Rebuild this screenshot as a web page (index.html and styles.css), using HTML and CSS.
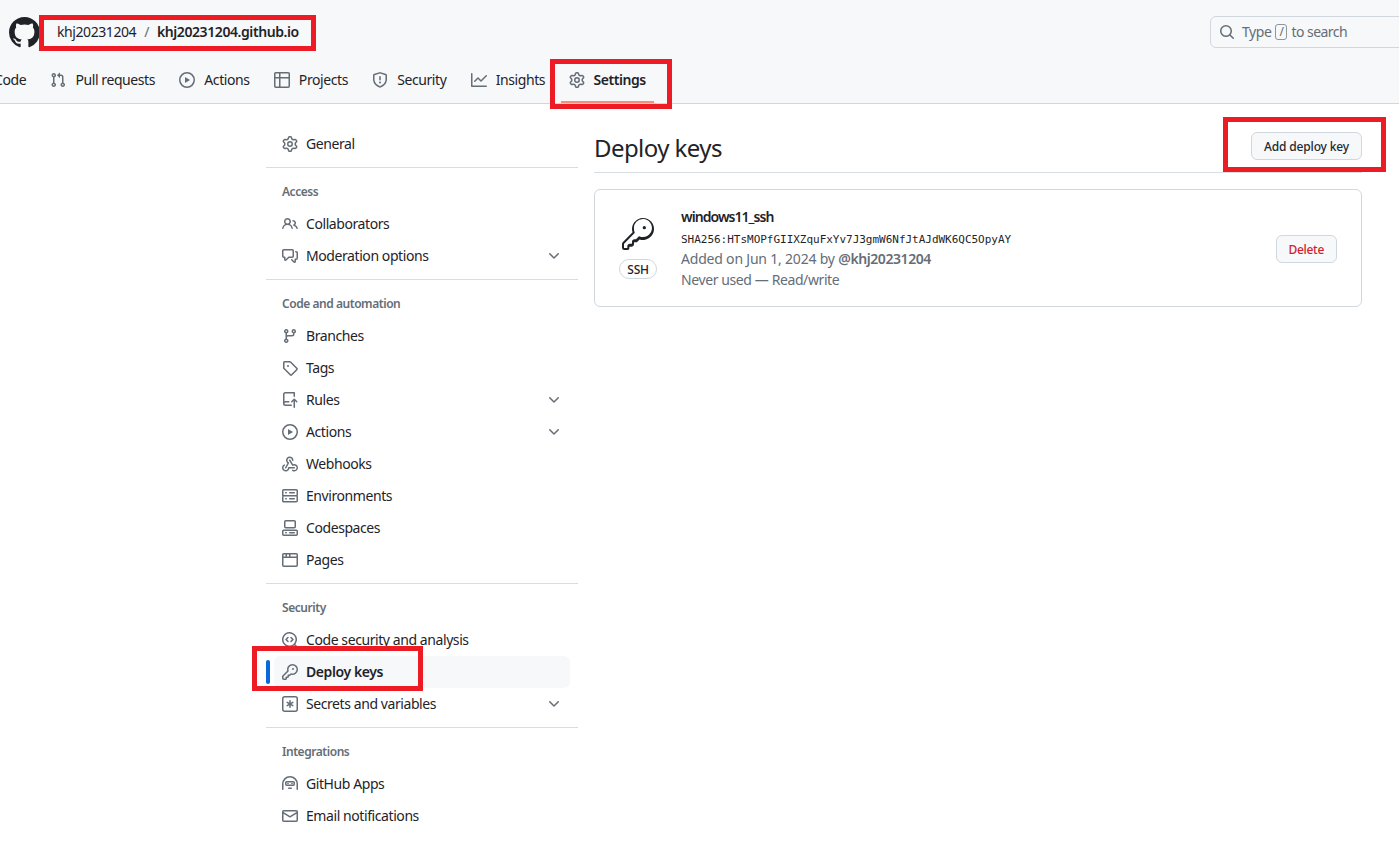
FILE: index.html
```html
<!DOCTYPE html>
<html lang="en">
<head>
    <meta charset="UTF-8">
    <meta name="viewport" content="width=device-width, initial-scale=1.0">
    <title>Deploy keys</title>
    <link rel="stylesheet" href="styles.css">
</head>
<body>
    <svg class="icon-defs" aria-hidden="true">
        <symbol id="i-github" viewBox="0 0 16 16"><path d="M8 0c4.42 0 8 3.58 8 8a8.013 8.013 0 0 1-5.45 7.59c-.4.08-.55-.17-.55-.38 0-.27.01-1.13.01-2.2 0-.75-.25-1.23-.54-1.48 1.78-.2 3.65-.88 3.65-3.95 0-.88-.31-1.59-.82-2.15.08-.2.36-1.02-.08-2.12 0 0-.67-.22-2.2.82-.64-.18-1.32-.27-2-.27-.68 0-1.36.09-2 .27-1.53-1.03-2.2-.82-2.2-.82-.44 1.1-.16 1.92-.08 2.12-.51.56-.82 1.28-.82 2.15 0 3.06 1.86 3.75 3.64 3.95-.23.2-.44.55-.51 1.07-.46.21-1.61.55-2.33-.66-.15-.24-.6-.83-1.23-.82-.67.01-.27.38.01.53.34.19.73.9.82 1.13.16.45.68 1.31 2.69.94 0 .67.01 1.3.01 1.49 0 .21-.15.45-.55.38A7.995 7.995 0 0 1 0 8c0-4.42 3.58-8 8-8Z"/></symbol>
        <symbol id="i-code" viewBox="0 0 16 16"><path d="m11.28 3.22 4.25 4.25a.75.75 0 0 1 0 1.06l-4.25 4.25a.749.749 0 0 1-1.275-.326.749.749 0 0 1 .215-.734L13.94 8l-3.72-3.72a.749.749 0 0 1 .326-1.275.749.749 0 0 1 .734.215Zm-6.56 0a.751.751 0 0 1 1.042.018.751.751 0 0 1 .018 1.042L2.06 8l3.72 3.72a.749.749 0 0 1-.326 1.275.749.749 0 0 1-.734-.215L.47 8.53a.75.75 0 0 1 0-1.06Z"/></symbol>
        <symbol id="i-pull" viewBox="0 0 16 16"><path d="M1.5 3.25a2.25 2.25 0 1 1 3 2.122v5.256a2.251 2.251 0 1 1-1.5 0V5.372A2.25 2.25 0 0 1 1.5 3.25Zm5.677-.177L9.573.677A.25.25 0 0 1 10 .854V2.5h1A2.5 2.5 0 0 1 13.5 5v5.628a2.251 2.251 0 1 1-1.5 0V5a1 1 0 0 0-1-1h-1v1.646a.25.25 0 0 1-.427.177L7.177 3.427a.25.25 0 0 1 0-.354ZM3.75 2.5a.75.75 0 1 0 0 1.5.75.75 0 0 0 0-1.5Zm0 9.5a.75.75 0 1 0 0 1.5.75.75 0 0 0 0-1.5Zm8.25.75a.75.75 0 1 0 1.5 0 .75.75 0 0 0-1.5 0Z"/></symbol>
        <symbol id="i-play" viewBox="0 0 16 16"><path d="M8 0a8 8 0 1 1 0 16A8 8 0 0 1 8 0ZM1.5 8a6.5 6.5 0 1 0 13 0 6.5 6.5 0 0 0-13 0Zm4.879-2.773 4.264 2.559a.25.25 0 0 1 0 .428l-4.264 2.559A.25.25 0 0 1 6 10.559V5.442a.25.25 0 0 1 .379-.215Z"/></symbol>
        <symbol id="i-table" viewBox="0 0 16 16"><path d="M0 1.75C0 .784.784 0 1.75 0h12.5C15.216 0 16 .784 16 1.75v12.5A1.75 1.75 0 0 1 14.25 16H1.75A1.75 1.75 0 0 1 0 14.25ZM6.5 6.5v8h7.75a.25.25 0 0 0 .25-.25V6.5Zm8-1.5V1.75a.25.25 0 0 0-.25-.25H6.5V5Zm-13 1.5v7.75c0 .138.112.25.25.25H5v-8ZM5 5V1.5H1.75a.25.25 0 0 0-.25.25V5Z"/></symbol>
        <symbol id="i-shield" viewBox="0 0 16 16"><path d="M7.467.133a1.748 1.748 0 0 1 1.066 0l5.25 1.68A1.75 1.75 0 0 1 15 3.48V7c0 1.566-.32 3.182-1.303 4.682-.983 1.498-2.585 2.813-5.032 3.855a1.697 1.697 0 0 1-1.33 0c-2.447-1.042-4.049-2.357-5.032-3.855C1.32 10.182 1 8.566 1 7V3.48a1.75 1.75 0 0 1 1.217-1.667Zm.61 1.429a.25.25 0 0 0-.153 0l-5.25 1.68a.25.25 0 0 0-.174.238V7c0 1.358.275 2.666 1.057 3.86.784 1.194 2.121 2.34 4.366 3.297a.196.196 0 0 0 .154 0c2.245-.956 3.582-2.104 4.366-3.298C13.225 9.666 13.5 8.36 13.5 7V3.48a.251.251 0 0 0-.174-.237l-5.25-1.68ZM8.75 4.75v3a.75.75 0 0 1-1.5 0v-3a.75.75 0 0 1 1.5 0ZM9 10.5a1 1 0 1 1-2 0 1 1 0 0 1 2 0Z"/></symbol>
        <symbol id="i-graph" viewBox="0 0 16 16"><path d="M1.5 1.75V13.5h13.75a.75.75 0 0 1 0 1.5H.75a.75.75 0 0 1-.75-.75V1.75a.75.75 0 0 1 1.5 0Zm14.28 2.53-5.25 5.25a.75.75 0 0 1-1.06 0L7 7.06 4.28 9.78a.751.751 0 0 1-1.042-.018.751.751 0 0 1-.018-1.042l3.25-3.25a.75.75 0 0 1 1.06 0L10 7.94l4.72-4.72a.751.751 0 0 1 1.042.018.751.751 0 0 1 .018 1.042Z"/></symbol>
        <symbol id="i-gear" viewBox="0 0 16 16"><path d="M8 0a8.2 8.2 0 0 1 .701.031C9.444.095 9.99.645 10.16 1.29l.288 1.107c.018.066.079.158.212.224.231.114.454.243.668.386.123.082.233.09.299.071l1.103-.303c.644-.176 1.392.021 1.82.63.27.385.506.792.704 1.218.315.675.111 1.422-.364 1.891l-.814.806c-.049.048-.098.147-.088.294.016.257.016.515 0 .772-.01.147.038.246.088.294l.814.806c.475.469.679 1.216.364 1.891a7.977 7.977 0 0 1-.704 1.217c-.428.61-1.176.807-1.82.63l-1.102-.302c-.067-.019-.177-.011-.3.071a5.909 5.909 0 0 1-.668.386c-.133.066-.194.158-.211.224l-.29 1.106c-.168.646-.715 1.196-1.458 1.26a8.006 8.006 0 0 1-1.402 0c-.743-.064-1.289-.614-1.458-1.26l-.289-1.106c-.018-.066-.079-.158-.212-.224a5.738 5.738 0 0 1-.668-.386c-.123-.082-.233-.09-.299-.071l-1.103.303c-.644.176-1.392-.021-1.82-.63a8.12 8.12 0 0 1-.704-1.218c-.315-.675-.111-1.422.363-1.891l.815-.806c.05-.048.098-.147.088-.294a6.214 6.214 0 0 1 0-.772c.01-.147-.038-.246-.088-.294l-.815-.806C.635 6.045.431 5.298.746 4.623a7.92 7.92 0 0 1 .704-1.217c.428-.61 1.176-.807 1.82-.63l1.102.302c.067.019.177.011.3-.071.214-.143.437-.272.668-.386.133-.066.194-.158.211-.224l.29-1.106C6.009.645 6.556.095 7.299.03 7.53.01 7.764 0 8 0Zm-.571 1.525c-.036.003-.108.036-.137.146l-.289 1.105c-.147.561-.549.967-.998 1.189-.173.086-.34.183-.5.29-.417.278-.97.423-1.529.27l-1.103-.303c-.109-.03-.175.016-.195.045-.22.312-.412.644-.573.99-.014.031-.021.11.059.19l.815.806c.411.406.562.957.53 1.456a4.709 4.709 0 0 0 0 .582c.032.499-.119 1.05-.53 1.456l-.815.806c-.081.08-.073.159-.059.19.162.346.353.677.573.989.02.03.085.076.195.046l1.102-.303c.56-.153 1.113-.008 1.53.27.161.107.328.204.501.29.447.222.85.629.997 1.189l.289 1.105c.029.109.101.143.137.146a6.6 6.6 0 0 0 1.142 0c.036-.003.108-.036.137-.146l.289-1.105c.147-.561.549-.967.998-1.189.173-.086.34-.183.5-.29.417-.278.97-.423 1.529-.27l1.103.303c.109.029.175-.016.195-.045.22-.313.411-.644.573-.99.014-.031.021-.11-.059-.19l-.815-.806c-.411-.406-.562-.957-.53-1.456a4.709 4.709 0 0 0 0-.582c-.032-.499.119-1.05.53-1.456l.815-.806c.081-.08.073-.159.059-.19a6.464 6.464 0 0 0-.573-.989c-.02-.03-.085-.076-.195-.046l-1.102.303c-.56.153-1.113.008-1.53-.27a4.44 4.44 0 0 0-.501-.29c-.447-.222-.85-.629-.997-1.189l-.289-1.105c-.029-.11-.101-.143-.137-.146a6.6 6.6 0 0 0-1.142 0ZM11 8a3 3 0 1 1-6 0 3 3 0 0 1 6 0ZM9.5 8a1.5 1.5 0 1 0-3.001.001A1.5 1.5 0 0 0 9.5 8Z"/></symbol>
        <symbol id="i-search" viewBox="0 0 16 16"><path d="M10.68 11.74a6 6 0 0 1-7.922-8.982 6 6 0 0 1 8.982 7.922l3.04 3.04a.749.749 0 0 1-.326 1.275.749.749 0 0 1-.734-.215ZM11.5 7a4.499 4.499 0 1 0-8.997 0A4.499 4.499 0 0 0 11.5 7Z"/></symbol>
        <symbol id="i-people" viewBox="0 0 16 16"><path d="M2 5.5a3.5 3.5 0 1 1 5.898 2.549 5.508 5.508 0 0 1 3.034 4.084.75.75 0 1 1-1.482.235 4 4 0 0 0-7.9 0 .75.75 0 0 1-1.482-.236A5.507 5.507 0 0 1 3.102 8.05 3.493 3.493 0 0 1 2 5.5ZM11 4a3.001 3.001 0 0 1 2.22 5.018 5.01 5.01 0 0 1 2.56 3.012.749.749 0 0 1-.885.954.752.752 0 0 1-.549-.514 3.507 3.507 0 0 0-2.522-2.372.75.75 0 0 1-.574-.73v-.352a.75.75 0 0 1 .416-.672A1.5 1.5 0 0 0 11 5.5.75.75 0 0 1 11 4Zm-5.5-.5a2 2 0 1 0-.001 3.999A2 2 0 0 0 5.5 3.5Z"/></symbol>
        <symbol id="i-comments" viewBox="0 0 16 16"><path d="M1.75 1h8.5c.966 0 1.75.784 1.75 1.75v5.5A1.75 1.75 0 0 1 10.25 10H7.061l-2.574 2.573A1.458 1.458 0 0 1 2 11.543V10h-.25A1.75 1.75 0 0 1 0 8.25v-5.5C0 1.784.784 1 1.75 1ZM1.5 2.75v5.5c0 .138.112.25.25.25h1a.75.75 0 0 1 .75.75v2.19l2.72-2.72a.749.749 0 0 1 .53-.22h3.5a.25.25 0 0 0 .25-.25v-5.5a.25.25 0 0 0-.25-.25h-8.5a.25.25 0 0 0-.25.25Zm13 2a.25.25 0 0 0-.25-.25h-.5a.75.75 0 0 1 0-1.5h.5c.966 0 1.75.784 1.75 1.75v5.5A1.75 1.75 0 0 1 14.25 12H14v1.543a1.458 1.458 0 0 1-2.487 1.03L9.22 12.28a.749.749 0 0 1 .326-1.275.749.749 0 0 1 .734.215l2.22 2.22v-2.19a.75.75 0 0 1 .75-.75h1a.25.25 0 0 0 .25-.25Z"/></symbol>
        <symbol id="i-branch" viewBox="0 0 16 16"><path d="M9.5 3.25a2.25 2.25 0 1 1 3 2.122V6A2.5 2.5 0 0 1 10 8.5H6a1 1 0 0 0-1 1v1.128a2.251 2.251 0 1 1-1.5 0V5.372a2.25 2.25 0 1 1 1.5 0v1.836A2.493 2.493 0 0 1 6 7h4a1 1 0 0 0 1-1v-.628A2.25 2.25 0 0 1 9.5 3.25Zm-6 0a.75.75 0 1 0 1.5 0 .75.75 0 0 0-1.5 0Zm8.25-.75a.75.75 0 1 0 0 1.5.75.75 0 0 0 0-1.5ZM4.25 12a.75.75 0 1 0 0 1.5.75.75 0 0 0 0-1.5Z"/></symbol>
        <symbol id="i-tag" viewBox="0 0 16 16"><path d="M1 7.775V2.75C1 1.784 1.784 1 2.75 1h5.025c.464 0 .91.184 1.238.513l6.25 6.25a1.75 1.75 0 0 1 0 2.474l-5.026 5.026a1.75 1.75 0 0 1-2.474 0l-6.25-6.25A1.752 1.752 0 0 1 1 7.775Zm1.5 0c0 .066.026.13.073.177l6.25 6.25a.25.25 0 0 0 .354 0l5.025-5.025a.25.25 0 0 0 0-.354l-6.25-6.25a.25.25 0 0 0-.177-.073H2.75a.25.25 0 0 0-.25.25ZM6 5a1 1 0 1 1 0 2 1 1 0 0 1 0-2Z"/></symbol>
        <symbol id="i-rules" viewBox="0 0 16 16"><path d="M1 2.5A2.5 2.5 0 0 1 3.5 0h8.75a.75.75 0 0 1 .75.75v3.5a.75.75 0 0 1-1.5 0V1.5h-8a1 1 0 0 0-1 1v6.708A2.492 2.492 0 0 1 3.5 9h3.25a.75.75 0 0 1 0 1.5H3.5a1 1 0 0 0 0 2h5.75a.75.75 0 0 1 0 1.5H3.5A2.5 2.5 0 0 1 1 11.5Zm13.23 7.79h-.001l-1.224-1.224v6.184a.75.75 0 0 1-1.5 0V9.066L10.28 10.29a.75.75 0 0 1-1.06-1.061l2.505-2.504a.75.75 0 0 1 1.06 0L15.29 9.23a.751.751 0 0 1-.018 1.042.751.751 0 0 1-1.042.018Z"/></symbol>
        <symbol id="i-webhook" viewBox="0 0 16 16"><path d="M5.5 4.25a2.25 2.25 0 0 1 4.5 0 .75.75 0 0 0 1.5 0 3.75 3.75 0 1 0-6.14 2.889l-2.272 4.258a.75.75 0 0 0 1.324.706L7 7.25a.75.75 0 0 0-.309-1.015A2.25 2.25 0 0 1 5.5 4.25Z"/><path d="M7.364 3.607a.75.75 0 0 1 1.03.257l2.608 4.349a3.75 3.75 0 1 1-.628 6.785.75.75 0 0 1 .752-1.299 2.25 2.25 0 1 0-.033-3.88.75.75 0 0 1-1.03-.256L7.107 4.636a.75.75 0 0 1 .257-1.03Z"/><path d="M2.9 8.776A.75.75 0 0 1 2.625 9.8 2.25 2.25 0 1 0 6 11.75a.75.75 0 0 1 .75-.751h5.5a.75.75 0 0 1 0 1.5H7.425a3.751 3.751 0 1 1-5.55-3.998.75.75 0 0 1 1.024.274Z"/></symbol>
        <symbol id="i-server" viewBox="0 0 16 16"><path d="M1.75 1h12.5c.966 0 1.75.784 1.75 1.75v4c0 .372-.116.717-.314 1 .198.283.314.628.314 1v4a1.75 1.75 0 0 1-1.75 1.75H1.75A1.75 1.75 0 0 1 0 13.25v-4c0-.372.116-.717.314-1a1.739 1.739 0 0 1-.314-1v-4C0 1.784.784 1 1.75 1ZM1.5 2.75v4c0 .138.112.25.25.25h12.5a.25.25 0 0 0 .25-.25v-4a.25.25 0 0 0-.25-.25H1.75a.25.25 0 0 0-.25.25Zm.25 5.75a.25.25 0 0 0-.25.25v4c0 .138.112.25.25.25h12.5a.25.25 0 0 0 .25-.25v-4a.25.25 0 0 0-.25-.25ZM7 4.75A.75.75 0 0 1 7.75 4h4.5a.75.75 0 0 1 0 1.5h-4.5A.75.75 0 0 1 7 4.75ZM7.75 10h4.5a.75.75 0 0 1 0 1.5h-4.5a.75.75 0 0 1 0-1.5ZM3 4.75A.75.75 0 0 1 3.75 4h.5a.75.75 0 0 1 0 1.5h-.5A.75.75 0 0 1 3 4.75ZM3.75 10h.5a.75.75 0 0 1 0 1.5h-.5a.75.75 0 0 1 0-1.5Z"/></symbol>
        <symbol id="i-codespaces" viewBox="0 0 16 16"><path d="M0 11.25c0-.966.784-1.75 1.75-1.75h12.5c.966 0 1.75.784 1.75 1.75v3A1.75 1.75 0 0 1 14.25 16H1.75A1.75 1.75 0 0 1 0 14.25Zm2-9.5C2 .784 2.784 0 3.75 0h8.5C13.216 0 14 .784 14 1.75v5a1.75 1.75 0 0 1-1.75 1.75h-8.5A1.75 1.75 0 0 1 2 6.75Zm1.75-.25a.25.25 0 0 0-.25.25v5c0 .138.112.25.25.25h8.5a.25.25 0 0 0 .25-.25v-5a.25.25 0 0 0-.25-.25Zm-2 9.5a.25.25 0 0 0-.25.25v3c0 .138.112.25.25.25h12.5a.25.25 0 0 0 .25-.25v-3a.25.25 0 0 0-.25-.25Z"/><path d="M7 12.75a.75.75 0 0 1 .75-.75h4.5a.75.75 0 0 1 0 1.5h-4.5a.75.75 0 0 1-.75-.75Zm-4 0a.75.75 0 0 1 .75-.75h.5a.75.75 0 0 1 0 1.5h-.5a.75.75 0 0 1-.75-.75Z"/></symbol>
        <symbol id="i-browser" viewBox="0 0 16 16"><path d="M0 2.75C0 1.784.784 1 1.75 1h12.5c.966 0 1.75.784 1.75 1.75v10.5A1.75 1.75 0 0 1 14.25 15H1.75A1.75 1.75 0 0 1 0 13.25ZM14.5 6h-13v7.25c0 .138.112.25.25.25h12.5a.25.25 0 0 0 .25-.25Zm-6-3.5v2h6V2.75a.25.25 0 0 0-.25-.25ZM5 2.5v2h2v-2Zm-3.25 0a.25.25 0 0 0-.25.25V4.5h2v-2Z"/></symbol>
        <symbol id="i-codescan" viewBox="0 0 16 16"><path d="M8.47 4.97a.75.75 0 0 0 0 1.06L9.94 7.5 8.47 8.97a.75.75 0 1 0 1.06 1.06l2-2a.75.75 0 0 0 0-1.06l-2-2a.75.75 0 0 0-1.06 0ZM6.53 6.03a.75.75 0 0 0-1.06-1.06l-2 2a.75.75 0 0 0 0 1.06l2 2a.75.75 0 1 0 1.06-1.06L5.06 7.5l1.47-1.47Z"/><path d="M12.246 13.307a7.501 7.501 0 1 1 1.06-1.06l2.474 2.473a.749.749 0 0 1-.326 1.275.749.749 0 0 1-.734-.215ZM1.5 7.5a6.002 6.002 0 0 0 3.608 5.504 6.002 6.002 0 0 0 6.486-1.117.748.748 0 0 1 .292-.293A6 6 0 1 0 1.5 7.5Z"/></symbol>
        <symbol id="i-key" viewBox="0 0 16 16"><path d="M10.5 0a5.499 5.499 0 1 1-1.288 10.848l-.932.932a.749.749 0 0 1-.53.22H7v.75a.749.749 0 0 1-.22.53l-.5.5a.749.749 0 0 1-.53.22H5v.75a.749.749 0 0 1-.22.53l-.5.5a.749.749 0 0 1-.53.22h-2A1.75 1.75 0 0 1 0 14.25v-2c0-.199.079-.389.22-.53l4.932-4.932A5.5 5.5 0 0 1 10.5 0Zm-4 5.5c-.001.431.069.86.205 1.269a.75.75 0 0 1-.181.768L1.5 12.56v1.69c0 .138.112.25.25.25h1.69l.06-.06v-1.19a.75.75 0 0 1 .75-.75h1.19l.06-.06v-1.19a.75.75 0 0 1 .75-.75h1.19l1.023-1.025a.75.75 0 0 1 .768-.18A4 4 0 1 0 6.5 5.5ZM11 6a1 1 0 1 1 0-2 1 1 0 0 1 0 2Z"/></symbol>
        <symbol id="i-key-24" viewBox="0 0 24 24"><path d="M16.75 8.5a1.25 1.25 0 1 0 0-2.5 1.25 1.25 0 0 0 0 2.5Z"/><path d="M15.75 0a8.25 8.25 0 1 1-2.541 16.101l-1.636 1.636a1.744 1.744 0 0 1-1.237.513H9.25a.25.25 0 0 0-.25.25v1.25a1.75 1.75 0 0 1-1.75 1.75h-1.5a.25.25 0 0 0-.25.25v1.25A1.75 1.75 0 0 1 3.75 24H1.75A1.75 1.75 0 0 1 0 22.25v-2.836c0-.464.185-.908.513-1.236l7.402-7.402A8.25 8.25 0 0 1 15.75 0ZM9 8.25a6.733 6.733 0 0 0 .463 2.462.75.75 0 0 1-.168.808l-7.722 7.722a.25.25 0 0 0-.073.176v2.832c0 .138.112.25.25.25h2a.25.25 0 0 0 .25-.25v-1.25c0-.966.784-1.75 1.75-1.75h1.5a.25.25 0 0 0 .25-.25v-1.25c0-.966.784-1.75 1.75-1.75h1.086a.25.25 0 0 0 .177-.073l1.971-1.972a.75.75 0 0 1 .795-.172A6.75 6.75 0 1 0 9 8.25Z"/></symbol>
        <symbol id="i-asterisk" viewBox="0 0 16 16"><path d="M0 2.75A2.75 2.75 0 0 1 2.75 0h10.5A2.75 2.75 0 0 1 16 2.75v10.5A2.75 2.75 0 0 1 13.25 16H2.75A2.75 2.75 0 0 1 0 13.25ZM2.75 1.5c-.69 0-1.25.56-1.25 1.25v10.5c0 .69.56 1.25 1.25 1.25h10.5c.69 0 1.25-.56 1.25-1.25V2.75c0-.69-.56-1.25-1.25-1.25Z"/><path d="M8 4a.75.75 0 0 1 .75.75V6.7l1.69-.975a.75.75 0 0 1 .75 1.3L9.5 8l1.69.976a.75.75 0 0 1-.75 1.298L8.75 9.3v1.951a.75.75 0 0 1-1.5 0V9.299l-1.69.976a.75.75 0 0 1-.75-1.3L6.5 8l-1.69-.975a.75.75 0 0 1 .75-1.3l1.69.976V4.75A.75.75 0 0 1 8 4Z"/></symbol>
        <symbol id="i-hubot" viewBox="0 0 16 16"><path fill-rule="evenodd" d="M0 8a8 8 0 0 1 16 0v5.25a.75.75 0 0 1-1.5 0V8a6.5 6.5 0 1 0-13 0v5.25a.75.75 0 0 1-1.5 0Zm3-1.25C3 5.784 3.784 5 4.75 5h6.5c.966 0 1.75.784 1.75 1.75v1.5A1.75 1.75 0 0 1 11.25 10h-6.5A1.75 1.75 0 0 1 3 8.25Zm1.75-.25a.25.25 0 0 0-.25.25v1.5c0 .138.112.25.25.25h6.5a.25.25 0 0 0 .25-.25v-1.5a.25.25 0 0 0-.25-.25ZM6 12.25a.75.75 0 0 1 .75-.75h2.5a.75.75 0 0 1 0 1.5h-2.5a.75.75 0 0 1-.75-.75Z"/><circle cx="6" cy="7.5" r=".8"/><circle cx="10" cy="7.5" r=".8"/></symbol>
        <symbol id="i-mail" viewBox="0 0 16 16"><path d="M1.75 2h12.5c.966 0 1.75.784 1.75 1.75v8.5A1.75 1.75 0 0 1 14.25 14H1.75A1.75 1.75 0 0 1 0 12.25v-8.5C0 2.784.784 2 1.75 2ZM1.5 12.251c0 .138.112.25.25.25h12.5a.25.25 0 0 0 .25-.25V5.809L8.38 9.397a.75.75 0 0 1-.76 0L1.5 5.809v6.442Zm13-8.181v-.32a.25.25 0 0 0-.25-.25H1.75a.25.25 0 0 0-.25.25v.32L8 7.88Z"/></symbol>
        <symbol id="i-chevron" viewBox="0 0 16 16"><path d="M12.78 5.22a.749.749 0 0 1 0 1.06l-4.25 4.25a.749.749 0 0 1-1.06 0L3.22 6.28a.749.749 0 1 1 1.06-1.06L8 8.939l3.72-3.719a.749.749 0 0 1 1.06 0Z"/></symbol>
    </svg>

    <header class="app-header">
        <div class="top-row">
            <svg class="logo"><use href="#i-github"/></svg>
            <nav class="breadcrumb">
                <a>khj20231204</a>
                <span class="slash">/</span>
                <a class="repo">khj20231204.github.io</a>
            </nav>
            <div class="search">
                <svg class="icon"><use href="#i-search"/></svg>
                <span>Type</span>
                <kbd>/</kbd>
                <span>to search</span>
            </div>
        </div>
        <nav class="tabs">
            <a class="tab"><svg class="icon"><use href="#i-code"/></svg>Code</a>
            <a class="tab"><svg class="icon"><use href="#i-pull"/></svg>Pull requests</a>
            <a class="tab"><svg class="icon"><use href="#i-play"/></svg>Actions</a>
            <a class="tab"><svg class="icon"><use href="#i-table"/></svg>Projects</a>
            <a class="tab"><svg class="icon"><use href="#i-shield"/></svg>Security</a>
            <a class="tab"><svg class="icon"><use href="#i-graph"/></svg>Insights</a>
            <a class="tab selected"><svg class="icon"><use href="#i-gear"/></svg>Settings</a>
        </nav>
    </header>

    <div class="layout">
        <aside class="sidebar">
            <a class="side-item"><svg class="icon"><use href="#i-gear"/></svg>General</a>

            <hr class="divider">
            <h3 class="side-heading">Access</h3>
            <a class="side-item"><svg class="icon"><use href="#i-people"/></svg>Collaborators</a>
            <a class="side-item"><svg class="icon"><use href="#i-comments"/></svg>Moderation options<svg class="icon chevron"><use href="#i-chevron"/></svg></a>

            <hr class="divider">
            <h3 class="side-heading">Code and automation</h3>
            <a class="side-item"><svg class="icon"><use href="#i-branch"/></svg>Branches</a>
            <a class="side-item"><svg class="icon"><use href="#i-tag"/></svg>Tags</a>
            <a class="side-item"><svg class="icon"><use href="#i-rules"/></svg>Rules<svg class="icon chevron"><use href="#i-chevron"/></svg></a>
            <a class="side-item"><svg class="icon"><use href="#i-play"/></svg>Actions<svg class="icon chevron"><use href="#i-chevron"/></svg></a>
            <a class="side-item"><svg class="icon"><use href="#i-webhook"/></svg>Webhooks</a>
            <a class="side-item"><svg class="icon"><use href="#i-server"/></svg>Environments</a>
            <a class="side-item"><svg class="icon"><use href="#i-codespaces"/></svg>Codespaces</a>
            <a class="side-item"><svg class="icon"><use href="#i-browser"/></svg>Pages</a>

            <hr class="divider">
            <h3 class="side-heading">Security</h3>
            <a class="side-item"><svg class="icon"><use href="#i-codescan"/></svg>Code security and analysis</a>
            <a class="side-item active"><svg class="icon"><use href="#i-key"/></svg>Deploy keys</a>
            <a class="side-item"><svg class="icon"><use href="#i-asterisk"/></svg>Secrets and variables<svg class="icon chevron"><use href="#i-chevron"/></svg></a>

            <hr class="divider">
            <h3 class="side-heading">Integrations</h3>
            <a class="side-item"><svg class="icon"><use href="#i-hubot"/></svg>GitHub Apps</a>
            <a class="side-item"><svg class="icon"><use href="#i-mail"/></svg>Email notifications</a>
        </aside>

        <main class="content">
            <div class="page-head">
                <h2>Deploy keys</h2>
                <button class="btn" type="button">Add deploy key</button>
            </div>

            <div class="key-card">
                <div class="key-type">
                    <svg class="key-icon"><use href="#i-key-24"/></svg>
                    <span class="label">SSH</span>
                </div>
                <div class="key-info">
                    <strong>windows11_ssh</strong>
                    <code>SHA256:HTsMOPfGIIXZquFxYv7J3gmW6NfJtAJdWK6QC5OpyAY</code>
                    <p>Added on Jun 1, 2024 by <a>@khj20231204</a></p>
                    <p>Never used — Read/write</p>
                </div>
                <button class="btn btn-danger" type="button">Delete</button>
            </div>
        </main>
    </div>

    <!-- red boxes drawn over the screenshot -->
    <div class="callout callout-repo"></div>
    <div class="callout callout-settings"></div>
    <div class="callout callout-add"></div>
    <div class="callout callout-deploy"></div>
</body>
</html>
```

FILE: styles.css
```css
* {
    box-sizing: border-box;
}

body {
    position: relative;
    margin: 0;
    height: 842px;
    font-family: "Noto Sans", "Open Sans", sans-serif;
    font-size: 14px;
    letter-spacing: -0.42px;
    color: #1f2328;
    background-color: #fff;
    overflow: hidden;
}

.icon-defs {
    display: none;
}

.icon {
    width: 16px;
    height: 16px;
    flex: none;
    fill: #656d76;
}

/* header */
.app-header {
    height: 104px;
    padding-top: 16px;
    background-color: #f6f8fa;
    border-bottom: 1px solid #d0d7de;
    overflow: hidden;
}

.top-row {
    display: flex;
    align-items: center;
    height: 32px;
    padding-left: 9px;
}

.logo {
    width: 31px;
    height: 31px;
    fill: #1f2328;
    flex: none;
}

.breadcrumb {
    display: flex;
    align-items: center;
    margin-left: 17px;
    padding-bottom: 1px;
}

.breadcrumb .slash {
    margin: 0 8px;
    color: #656d76;
}

.breadcrumb .repo {
    font-weight: 600;
}

.search {
    display: flex;
    align-items: center;
    flex: none;
    width: 300px;
    height: 32px;
    margin-left: auto;
    margin-right: -111px;
    padding: 0 0 1px 8px;
    color: #656d76;
    border: 1px solid #d0d7de;
    border-radius: 6px;
}

.search .icon {
    margin-top: 1px;
}

.search span:first-of-type {
    margin-left: 7px;
}

.search span:last-of-type {
    letter-spacing: -0.55px;
}

.search kbd {
    width: 12px;
    height: 16px;
    margin: 1px 4px 0;
    font-family: inherit;
    font-size: 12px;
    line-height: 14px;
    text-align: center;
    border: 1px solid #8c959f;
    border-radius: 3px;
}

.tabs {
    display: flex;
    gap: 8.3px;
    height: 46px;
    margin-top: 9px;
    margin-left: -39px;
}

.tab {
    position: relative;
    display: flex;
    align-items: center;
    height: 46px;
    padding: 0 8px 1px;
    white-space: nowrap;
}

.tab .icon {
    margin-top: 1px;
    margin-right: 9px;
}

.tab.selected {
    font-weight: 600;
}

.tab.selected .icon {
    margin-right: 8px;
}

.tab.selected::after {
    content: "";
    position: absolute;
    left: 0;
    right: 0;
    bottom: 0;
    height: 2px;
    background-color: #fd8c73;
}

/* layout */
.layout {
    display: flex;
    gap: 16px;
    padding: 24px 0 0 266px;
}

.sidebar {
    flex: none;
    width: 312px;
}

.side-item {
    position: relative;
    display: flex;
    align-items: center;
    gap: 8px;
    height: 32px;
    margin: 0 8px;
    padding: 0 8px 1px;
    border-radius: 6px;
}

.side-item .icon {
    margin-top: 1px;
}

.side-item .chevron {
    margin-left: auto;
}

.side-item.active {
    font-weight: 600;
    background-color: #f6f8fa;
}

.side-item.active::before {
    content: "";
    position: absolute;
    left: -8px;
    top: 4px;
    width: 4px;
    height: 24px;
    border-radius: 6px;
    background-color: #0969da;
}

.divider {
    height: 1px;
    margin: 7px 0 0;
    border: 0;
    background-color: #d8dee4;
}

.side-heading {
    height: 32px;
    margin: 8px 0 0;
    padding-left: 16px;
    font-size: 12px;
    font-weight: 600;
    line-height: 32px;
    letter-spacing: -0.45px;
    color: #656d76;
}

/* main */
.content {
    flex: none;
    width: 768px;
}

.page-head {
    display: flex;
    align-items: center;
    justify-content: space-between;
    height: 45px;
    padding: 4px 0 12px;
    border-bottom: 1px solid #d8dee4;
}

.page-head h2 {
    margin: 4px 0 0;
    font-size: 24px;
    font-weight: 400;
    line-height: 36px;
    letter-spacing: -0.57px;
}

.btn {
    height: 28px;
    padding: 0 12px;
    font-family: inherit;
    font-size: 12px;
    font-weight: 500;
    letter-spacing: -0.15px;
    color: #24292f;
    background-color: #f6f8fa;
    border: 1px solid #d0d7de;
    border-radius: 6px;
}

.btn-danger {
    flex: none;
    align-self: center;
    margin-top: 2px;
    margin-left: auto;
    letter-spacing: -0.3px;
    color: #cf222e;
}

.key-card {
    display: flex;
    align-items: flex-start;
    height: 118px;
    margin-top: 16px;
    padding: 16px 24px;
    border: 1px solid #d0d7de;
    border-radius: 6px;
}

.key-type {
    display: flex;
    flex-direction: column;
    align-items: center;
    gap: 9px;
    width: 38px;
    margin-top: 12px;
    margin-right: 24px;
}

.key-icon {
    width: 32px;
    height: 32px;
    fill: #1f2328;
}

.label {
    display: block;
    width: 38px;
    height: 20px;
    font-size: 12px;
    font-weight: 500;
    line-height: 19px;
    letter-spacing: -0.3px;
    text-align: center;
    border: 1px solid #d0d7de;
    border-radius: 2em;
}

.key-info {
    display: flex;
    flex-direction: column;
    line-height: 21px;
    letter-spacing: -0.2px;
    color: #656d76;
}

.key-info strong {
    font-weight: 600;
    letter-spacing: -0.95px;
    color: #1f2328;
}

.key-info code {
    height: 21px;
    padding-top: 4px;
    font-family: "DejaVu Sans Mono", monospace;
    font-size: 11px;
    line-height: 17px;
    letter-spacing: -0.02px;
    color: #1f2328;
}

.key-info p {
    margin: 0;
}

.key-info p:last-child {
    letter-spacing: -0.4px;
}

.key-info a {
    font-weight: 600;
    letter-spacing: -0.42px;
}

/* annotation boxes */
.callout {
    position: absolute;
    border: 5px solid #ed1c24;
}

.callout-repo {
    left: 39px;
    top: 15px;
    width: 277px;
    height: 36px;
}

.callout-settings {
    left: 550px;
    top: 59px;
    width: 122px;
    height: 50px;
}

.callout-add {
    left: 1223px;
    top: 117px;
    width: 163px;
    height: 55px;
}

.callout-deploy {
    left: 252px;
    top: 646px;
    width: 171px;
    height: 45px;
}
```
